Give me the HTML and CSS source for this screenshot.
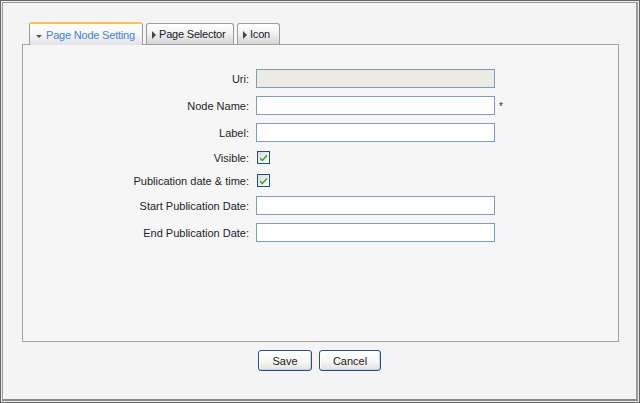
FILE: index.html
```html
<!DOCTYPE html>
<html>
<head>
<meta charset="utf-8">
<link rel="stylesheet" href="styles.css">
</head>
<body>
<div class="frame">
  <div class="inner">
    <div class="tabs">
      <div class="tab active"><span class="arrow-down"></span>Page Node Setting</div>
      <div class="tab t2"><span class="arrow-right"></span>Page Selector</div>
      <div class="tab t3"><span class="arrow-right"></span>Icon</div>
    </div>
    <div class="panel">
      <div class="form">
        <label class="lbl">Uri:</label>
        <div class="field"><span class="input readonly"></span></div>
        <label class="lbl">Node Name:</label>
        <div class="field"><span class="input"></span><span class="req">*</span></div>
        <label class="lbl">Label:</label>
        <div class="field"><span class="input"></span></div>
        <label class="lbl">Visible:</label>
        <div class="field"><span class="check"><svg width="11" height="11" viewBox="0 0 11 11"><path d="M2 5.2 L4.3 7.5 L9 2.6 L9 4.6 L4.3 9.4 L2 7.1 Z" fill="#21a121"/></svg></span></div>
        <label class="lbl">Publication date &amp; time:</label>
        <div class="field"><span class="check"><svg width="11" height="11" viewBox="0 0 11 11"><path d="M2 5.2 L4.3 7.5 L9 2.6 L9 4.6 L4.3 9.4 L2 7.1 Z" fill="#21a121"/></svg></span></div>
        <label class="lbl">Start Publication Date:</label>
        <div class="field"><span class="input"></span></div>
        <label class="lbl">End Publication Date:</label>
        <div class="field"><span class="input"></span></div>
      </div>
    </div>
    <div class="buttons">
      <button class="btn save">Save</button>
      <button class="btn cancel">Cancel</button>
    </div>
  </div>
</div>
</body>
</html>
```
FILE: styles.css
```css
* { box-sizing: border-box; }
html, body { margin: 0; padding: 0; background: #f4f4f4; }
body { font-family: "Liberation Sans", Arial, sans-serif; font-size: 11px; color: #1d1d2b; }

.frame {
  width: 640px;
  height: 403px;
  border: 1px solid #666666;
  padding: 1px;
  background: #ececec;
}
.inner {
  height: 100%;
  border: 1px solid #9d9d9d;
  border-bottom: 2px solid #8a8a8a;
  border-right: 2px solid #9a9a9a;
  background: #f4f4f4;
  padding: 19px 0 0 19px;
}

.tabs {
  display: flex;
  align-items: flex-end;
  gap: 3px;
  height: 22px;
  padding-left: 7px;
  position: relative;
  z-index: 2;
}
.tab {
  display: flex;
  align-items: center;
  height: 21px;
  border: 1px solid #9c9c9c;
  border-bottom: none;
  border-radius: 3px 3px 0 0;
  background: linear-gradient(to bottom, #ffffff 0%, #f2f2f2 45%, #d6d6d6 100%);
  color: #1a1a2a;
  padding-left: 5px;
  white-space: nowrap;
  letter-spacing: -0.2px;
}
.tab.active {
  height: 23px;
  margin-bottom: -1px;
  width: 114px;
  border-top: 2px solid #f7c54d;
  color: #3f82d6;
  padding-left: 6px;
  background: linear-gradient(to bottom, #ffffff 0%, #f6f6f6 50%, #e2e2e2 100%);
}
.tab.t2 { width: 88px; }
.tab.t3 { width: 43px; }

.arrow-down {
  display: inline-block;
  width: 0; height: 0;
  border-left: 3px solid transparent;
  border-right: 3px solid transparent;
  border-top: 3px solid #555;
  margin: 3px 4px 0 0;
}
.arrow-right {
  display: inline-block;
  width: 0; height: 0;
  border-top: 4px solid transparent;
  border-bottom: 4px solid transparent;
  border-left: 4px solid #444;
  margin: 1px 3px 0 0;
}

.panel {
  width: 597px;
  height: 298px;
  border: 1px solid #a3a3a3;
  background: #f6f6f6;
  padding-top: 24px;
  position: relative;
  z-index: 1;
}

.form {
  display: grid;
  grid-template-columns: 226px 1fr;
  grid-template-rows: 19px 19px 19px 15px 15px 19px 19px;
  column-gap: 7px;
  row-gap: 8px;
}
.lbl {
  text-align: right;
  align-self: center;
  white-space: nowrap;
}
.field {
  display: flex;
  align-items: center;
}
.input {
  display: block;
  width: 239px;
  height: 19px;
  border: 1px solid #7f9db9;
  background: #ffffff;
}
.input.readonly { background: #ebeae3; }
.req {
  margin-left: 4px;
  font-size: 10px;
  color: #333;
  margin-top: 1px;
}
.check {
  display: flex;
  align-items: center;
  justify-content: center;
  width: 13px;
  height: 13px;
  margin-left: 1px;
  border: 1px solid #1c5180;
  background: linear-gradient(to bottom right, #dcdcd7, #fbfbf9);
}

.buttons {
  display: flex;
  justify-content: center;
  gap: 7px;
  margin-top: 8px;
  padding-right: 19px;
}
.btn {
  font-family: "Liberation Sans", Arial, sans-serif;
  font-size: 11px;
  color: #1a1a2a;
  height: 21px;
  padding: 0;
  border: 1px solid #2a4f80;
  border-radius: 3px;
  background: linear-gradient(to bottom, #ffffff 0%, #f6f6f3 55%, #e3e2dc 100%);
  box-shadow: inset -1px -1px 0 #c6d2ea, inset 1px 1px 0 #ffffff;
}
.btn.save { width: 54px; }
.btn.cancel { width: 62px; }
```
